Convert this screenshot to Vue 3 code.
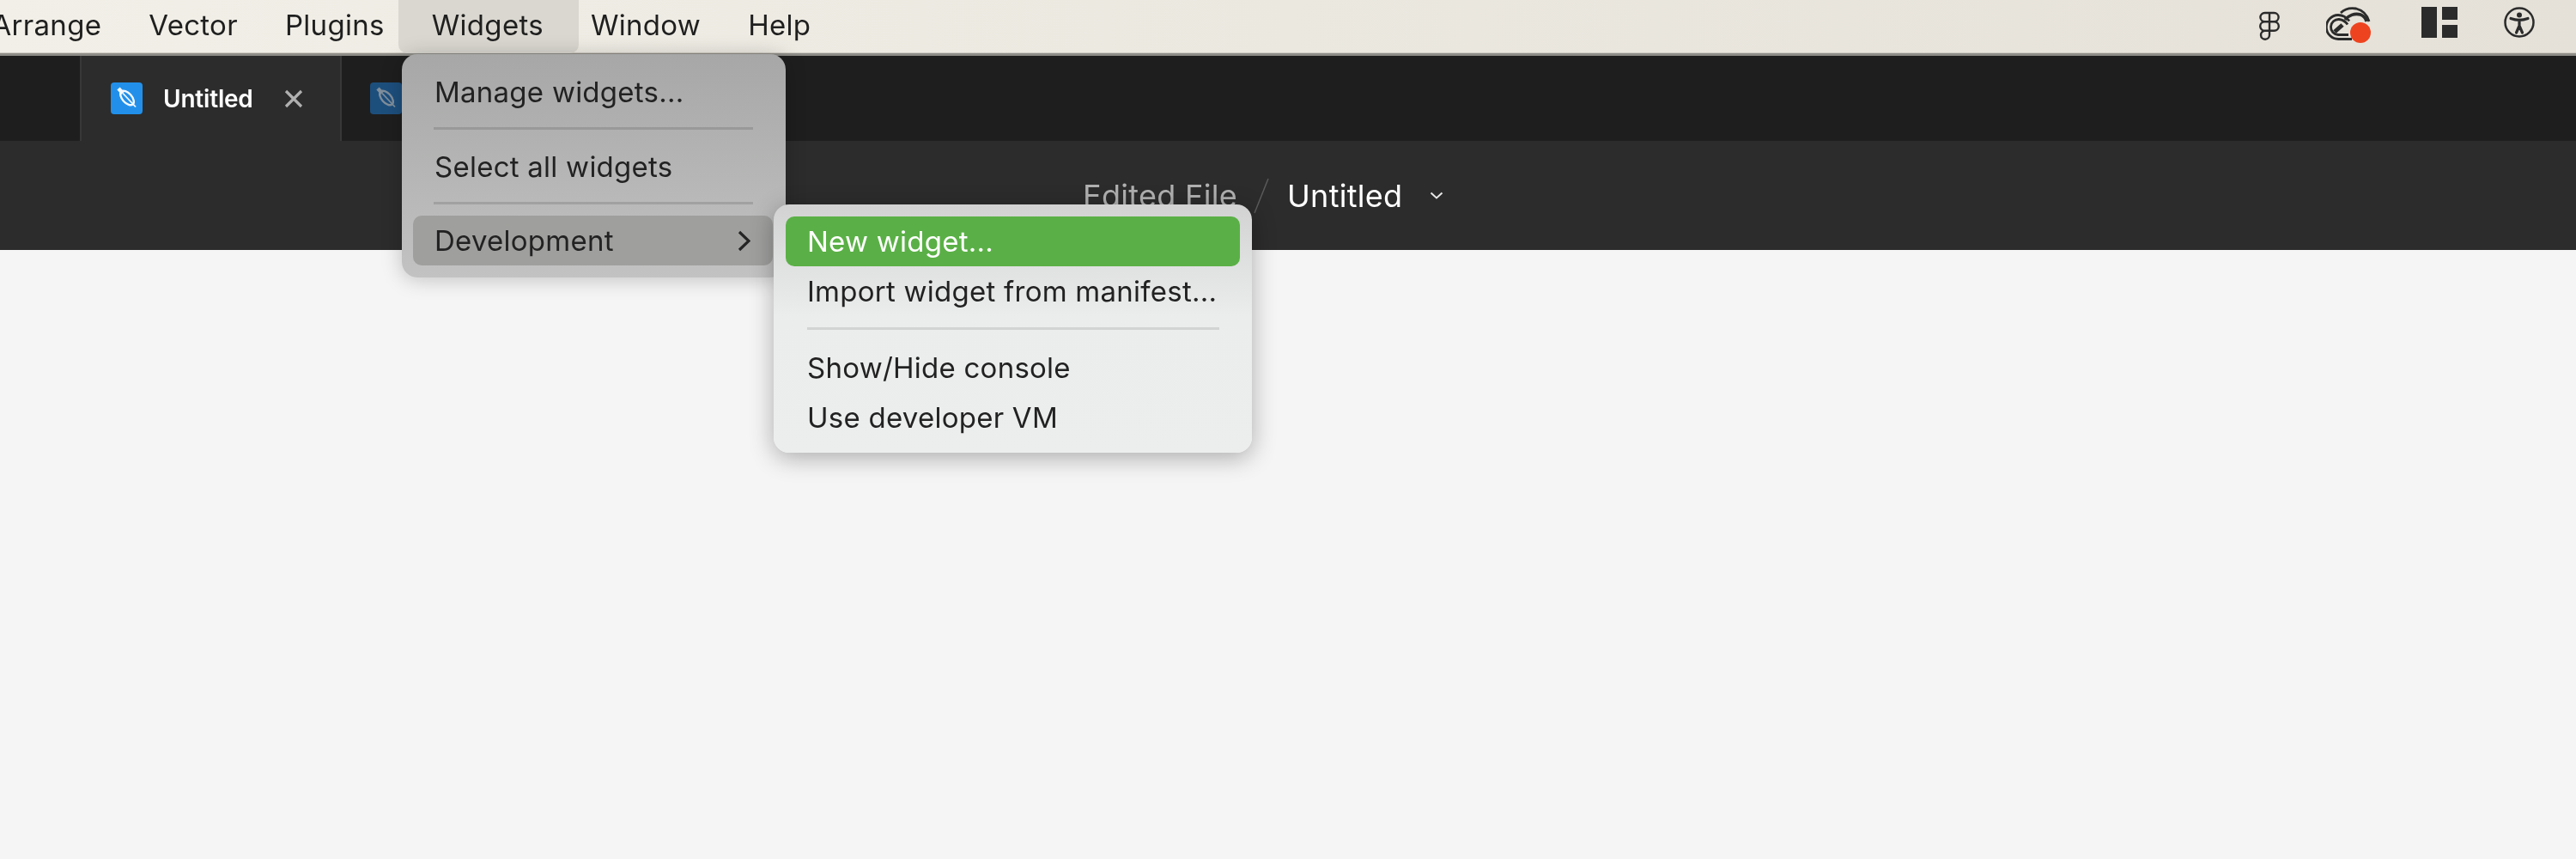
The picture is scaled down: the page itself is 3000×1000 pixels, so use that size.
<template>
  <div class="app">
    <header class="menubar">
      <nav class="menus">
        <span v-for="item in menuItems" :key="item" class="menuItem" :class="{ active: item === 'Widgets' }">{{ item }}</span>
      </nav>
      <div class="trayIcons">
        <svg class="figmaIcon" width="24" height="36" viewBox="0 0 24 36" fill="none" stroke="#2b2b2b" stroke-width="2.4">
          <path d="M12 2H6.500a4.700 4.700 0 0 0 0 10.200H12zM12 2h5.500a4.700 4.700 0 0 1 0 10.200H12zM12 12.200H6.500a4.800 4.800 0 0 0 0 10.600H12zM12 12.200h5.500a5.300 5.300 0 0 1 0 10.600H12zM12 22.800H6.500a5 5 0 1 0 5.500 5z" />
        </svg>
        <svg class="cloudIcon" width="56" height="46" viewBox="0 0 56 46" fill="none" stroke="#2b2b2b">
          <path d="M30 37.500H14.500A14 14 0 1 1 14 9.500c6 0 10 3 13 7" stroke-width="2.800" />
          <path d="M26 32.500H14A9 9 0 1 1 15 14.500c5 .5 8 3 10 6" stroke-width="2.800" />
          <path d="M10 29l9-8" stroke-width="5" />
          <path d="M17 7C22 2 29 1 35 2c8 2 13 8 15 15" stroke-width="2.800" />
          <path d="M22 15c4-5 11-8 18-6 3 1 6 4 7 8" stroke-width="3.600" />
          <circle cx="40" cy="30" r="12" fill="#ee431f" stroke="none" />
        </svg>
        <div class="layoutIcon">
          <span class="layoutTall"></span>
          <span class="layoutStack"><span></span><span></span></span>
        </div>
        <svg class="accessIcon" width="38" height="38" viewBox="0 0 38 38" fill="none">
          <circle cx="19" cy="19" r="16.500" stroke="#2b2b2b" stroke-width="2.500" />
          <circle cx="19" cy="10.500" r="3" fill="#2b2b2b" />
          <path d="M9 14.500c6 2.200 14 2.200 20 0M19 16v7M19 23l-3.500 8M19 23l3.500 8" stroke="#2b2b2b" stroke-width="3.200" stroke-linecap="round" />
        </svg>
      </div>
    </header>

    <div class="tabbar">
      <div class="tab current">
        <svg class="fileIcon" width="37" height="37" viewBox="0 0 37 37">
          <rect width="37" height="37" rx="4" fill="#2290ea" />
          <g fill="none" stroke="#f2f8fe">
            <ellipse cx="19" cy="18" rx="10" ry="5.500" transform="rotate(48 19 18)" stroke-width="2.400" />
            <path d="M9 7l5 5.500" stroke-width="4.500" />
            <path d="M14 12.500l15 16" stroke-width="1.800" />
          </g>
        </svg>
        <span class="tabName">Untitled</span>
        <svg class="closeIcon" width="22" height="22" viewBox="0 0 22 22">
          <path d="M2 2l18 18M20 2L2 20" stroke="#b0b0b0" stroke-width="3.200" />
        </svg>
      </div>
      <div class="tab other">
        <svg class="fileIcon" width="37" height="37" viewBox="0 0 37 37">
          <rect width="37" height="37" rx="4" fill="#1d4f7d" />
          <g fill="none" stroke="#7f8e9b">
            <ellipse cx="19" cy="18" rx="10" ry="5.500" transform="rotate(48 19 18)" stroke-width="2.400" />
            <path d="M9 7l5 5.500" stroke-width="4.500" />
            <path d="M14 12.500l15 16" stroke-width="1.800" />
          </g>
        </svg>
      </div>
    </div>

    <div class="toolbar">
      <span class="folder">Edited File</span>
      <svg class="slash" width="18" height="42" viewBox="0 0 18 42">
        <path d="M17 1L1 41" stroke="#5a5a5a" stroke-width="1.500" />
      </svg>
      <span class="fileName">Untitled</span>
      <svg class="caret" width="16" height="9" viewBox="0 0 16 9" fill="none">
        <path d="M1.500 1.500L8 7.500l6.500-6" stroke="#e8e8e8" stroke-width="2" />
      </svg>
    </div>

    <main class="canvas"></main>

    <div class="menu widgetsMenu">
      <div class="row">Manage widgets...</div>
      <div class="divider"></div>
      <div class="row">Select all widgets</div>
      <div class="divider"></div>
      <div class="row open">
        <span>Development</span>
        <svg width="15" height="25" viewBox="0 0 15 25" fill="none">
          <path d="M2 2l11 10.500L2 23" stroke="#242424" stroke-width="3.200" />
        </svg>
      </div>
    </div>

    <div class="menu devMenu">
      <div class="row selected">New widget...</div>
      <div class="row">Import widget from manifest...</div>
      <div class="divider"></div>
      <div class="row">Show/Hide console</div>
      <div class="row">Use developer VM</div>
    </div>
  </div>
</template>

<script setup>
const menuItems = ['Arrange', 'Vector', 'Plugins', 'Widgets', 'Window', 'Help']
</script>

<style>
html,
body {
  background: #f5f5f5;
}
</style>

<style scoped>
.app {
  position: relative;
  width: 3000px;
  height: 1000px;
  overflow: hidden;
  display: flex;
  flex-direction: column;
  font-family: Inter, "Liberation Sans", sans-serif;
  background: #f5f5f5;
  filter: blur(0.5px);
}

.menubar {
  height: 62px;
  flex-shrink: 0;
  display: flex;
  justify-content: space-between;
  align-items: center;
  background: linear-gradient(90deg, #f1efe7, #e5e1d9);
  box-shadow: inset 0 -1px 0 #cfccc4;
  border-bottom: 3px solid #8f8d87;
}

.menus {
  display: flex;
  align-items: center;
  height: 100%;
  margin-left: -37px;
}

.menuItem {
  padding: 0 27.5px 4px;
  height: 100%;
  box-sizing: border-box;
  display: flex;
  align-items: center;
  font-size: 33px;
  letter-spacing: 0.3px;
  color: #1f1f1f;
}

.menuItem.active {
  padding: 0 41px 4px 39px;
  margin: 0 -13.5px 0 -11.5px;
  background: #d9d7cf;
  border-radius: 0 0 10px 10px;
}

.trayIcons {
  position: relative;
  display: flex;
  align-items: center;
  height: 100%;
  padding-right: 47px;
}

.figmaIcon {
  margin-right: 54px;
}

.cloudIcon {
  margin-right: 55px;
}

.layoutIcon {
  display: flex;
  gap: 6px;
  width: 42px;
  height: 36px;
  margin: 0 53px 10px 0;
}

.accessIcon {
  margin-bottom: 10px;
}

.layoutTall {
  width: 18px;
  background: #2b2b2b;
}

.layoutStack {
  width: 18px;
  display: flex;
  flex-direction: column;
  gap: 6px;
}

.layoutStack span {
  flex: 1;
  background: #2b2b2b;
}

.tabbar {
  height: 99px;
  flex-shrink: 0;
  display: flex;
  padding-left: 93px;
  background: #1e1e1e;
}

.tab {
  display: flex;
  align-items: center;
  height: 99px;
  padding-bottom: 0;
  box-sizing: border-box;
}

.current {
  width: 305px;
  padding-left: 34px;
  background: #2c2c2c;
  border-left: 2px solid #383838;
  border-right: 2px solid #383838;
}

.other {
  padding-left: 33px;
}

.tabName {
  margin-left: 24px;
  font-size: 28px;
  font-weight: 600;
  letter-spacing: -0.2px;
  color: #fff;
}

.closeIcon {
  margin-left: 36px;
}

.toolbar {
  height: 127px;
  flex-shrink: 0;
  display: flex;
  align-items: center;
  padding-left: 1261px;
  background: #2c2c2c;
  font-size: 36px;
  letter-spacing: 0.3px;
}

.folder {
  color: #b0b0b0;
}

.slash {
  margin: 0 21px 0 19px;
}

.fileName {
  color: #fff;
}

.caret {
  margin-left: 32px;
}

.canvas {
  flex: 1;
  background: #f5f5f5;
}

.menu {
  position: absolute;
  box-sizing: border-box;
  display: flex;
  flex-direction: column;
  border-radius: 18px;
  font-size: 33px;
  letter-spacing: 0.25px;
  color: #222;
}

.widgetsMenu {
  left: 468px;
  top: 63px;
  width: 447px;
  height: 260px;
  padding: 15px 14px 0 13px;
  background: linear-gradient(180deg, #a6a7a6, #c2c2c2);
  box-shadow: 0 2px 24px rgba(0, 0, 0, 0.22);
}

.widgetsMenu .divider {
  height: 3px;
  margin: 12px 24px 13.500px;
  background: rgba(0, 0, 0, 0.13);
}

.row {
  display: flex;
  align-items: center;
  justify-content: space-between;
  height: 58px;
  flex-shrink: 0;
  padding: 0 25px;
  border-radius: 10px;
  white-space: nowrap;
}

.open {
  background: #9f9f9e;
  margin-right: 1px;
  padding-right: 26px;
}

.devMenu {
  left: 901px;
  top: 238px;
  width: 557px;
  height: 289px;
  padding: 14px 14px 0;
  background: linear-gradient(180deg, #d2d2d2 0%, #ebeded 45%, #eceeed 100%);
  box-shadow: 0 6px 28px rgba(0, 0, 0, 0.3);
}

.selected {
  background: #5ab046;
  color: #fff;
}

.devMenu .divider {
  height: 3px;
  margin: 13px 24px 15px 25px;
  background: #d2d4d3;
  flex-shrink: 0;
}
</style>
